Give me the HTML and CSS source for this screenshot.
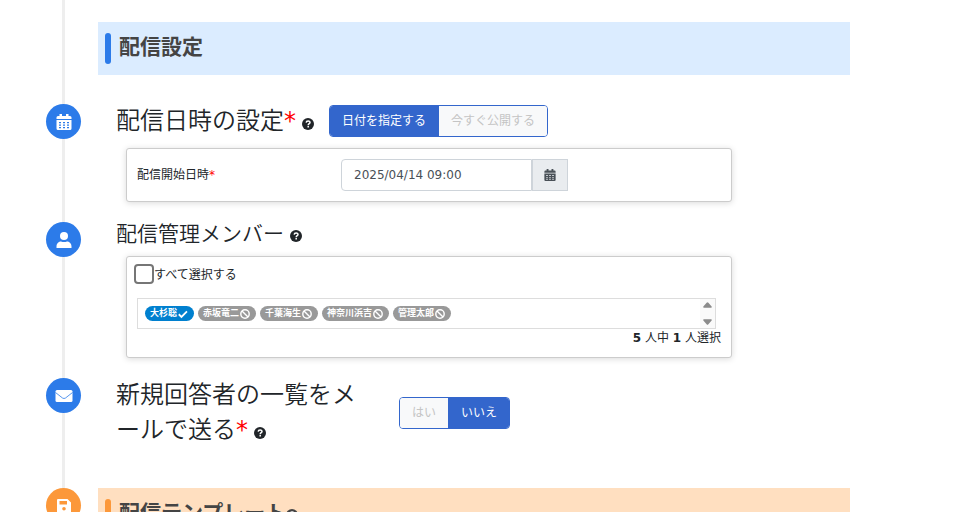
FILE: index.html
```html
<!DOCTYPE html>
<html lang="ja">
<head>
<meta charset="utf-8">
<meta name="viewport" content="width=device-width, initial-scale=1">
<title>配信設定</title>
<link rel="stylesheet" href="styles.css">
</head>
<body>
<svg class="sprite" aria-hidden="true">
  <symbol id="calendar" viewBox="0 0 16 16"><path d="M3.500 0h2.500v2h4V0h2.500v2H14a1.500 1.500 0 0 1 1.500 1.500V5H.5V3.500A1.500 1.500 0 0 1 2 2h1.500zM.5 6h15v8.500A1.500 1.500 0 0 1 14 16H2a1.500 1.500 0 0 1-1.500-1.500zM3 8v1.300h2V8zm4 0v1.300h2V8zm4 0v1.300h2V8zM3 10.500v1.300h2v-1.300zm4 0v1.300h2v-1.300zm4 0v1.300h2v-1.300zM3 13v1.300h2V13zm4 0v1.300h2V13zm4 0v1.300h2V13z" fill="currentColor" fill-rule="evenodd"/></symbol>
  <symbol id="user" viewBox="0 0 16 16"><circle cx="8" cy="4" r="4" fill="currentColor"/><path d="M.5 16v-1.500C.5 11 3 9.500 5 9.500c2 .8 4 .8 6 0 2 0 4.500 1.500 4.500 5V16z" fill="currentColor"/></symbol>
  <symbol id="mail" viewBox="0 0 18 14"><rect x=".5" y="1" width="17" height="12" rx="1.500" fill="currentColor"/><path d="M.5 3.500 7.500 9q1.500 1 3 0l7-5.500" fill="none" stroke="#2c7be9" stroke-width=".8"/></symbol>
  <symbol id="save" viewBox="0 0 16 16"><path d="M2 1h9.500L15 4.500V14a2 2 0 0 1-2 2H3a2 2 0 0 1-2-2V2a1 1 0 0 1 1-1zm1.500 2v3.500h7.500V3zM8 9a1.800 1.800 0 1 0 0 3.600A1.800 1.800 0 0 0 8 9z" fill="currentColor" fill-rule="evenodd"/></symbol>
  <symbol id="help" viewBox="0 0 12 12"><circle cx="6" cy="6" r="6" fill="currentColor"/><path d="M4.200 4.600C4.300 2.600 8 2.500 8 4.600 8 5.800 6.200 5.700 6.200 7.200M6.200 8.100v1.500" fill="none" stroke="#fff" stroke-width="1.500"/></symbol>
  <symbol id="check" viewBox="0 0 10 10"><path d="m1.500 5.200 2.200 2.200L8.300 2.800" fill="none" stroke="currentColor" stroke-width="1.500"/></symbol>
  <symbol id="ban" viewBox="0 0 10 10"><circle cx="5" cy="5" r="3.500" fill="none" stroke="currentColor" stroke-width="1.200"/><path d="m2.500 2.500 5 5" stroke="currentColor" stroke-width="1.200"/></symbol>
</svg>
<main class="timeline">
  <section class="row row-banner">
    <div></div>
    <h1 class="banner">配信設定</h1>
  </section>

  <section class="row row-date">
    <span class="marker"><svg><use href="#calendar"/></svg></span>
    <div>
      <div class="head">
        <h2 class="title">配信日時の設定<span class="req">*</span><svg class="help"><use href="#help"/></svg></h2>
        <div class="toggle" role="group" aria-label="配信日時の設定">
          <button type="button" class="on" aria-pressed="true">日付を指定する</button><button type="button" aria-pressed="false">今すぐ公開する</button>
        </div>
      </div>
      <div class="panel date">
        <label for="start">配信開始日時<span class="req">*</span></label>
        <div class="picker">
          <input id="start" type="text" value="2025/04/14 09:00">
          <button type="button" aria-label="カレンダー"><svg><use href="#calendar"/></svg></button>
        </div>
      </div>
    </div>
  </section>

  <section class="row row-members">
    <span class="marker"><svg><use href="#user"/></svg></span>
    <div>
      <h2 class="title small">配信管理メンバー<svg class="help"><use href="#help"/></svg></h2>
      <div class="panel members">
        <div class="all"><input id="all" type="checkbox"><label for="all">すべて選択する</label></div>
        <div class="list">
          <div class="chips">
            <button type="button" class="chip picked">大杉聡<svg><use href="#check"/></svg></button>
            <button type="button" class="chip">赤坂竜二<svg><use href="#ban"/></svg></button>
            <button type="button" class="chip">千葉海生<svg><use href="#ban"/></svg></button>
            <button type="button" class="chip">神奈川浜吉<svg><use href="#ban"/></svg></button>
            <button type="button" class="chip">管理太郎<svg><use href="#ban"/></svg></button>
          </div>
          <div class="scroll" aria-hidden="true">
            <svg viewBox="0 0 10 6"><path d="M1 6a1 1 0 0 1-.6-1.400L4 .6a1.300 1.300 0 0 1 2 0l3.600 4A1 1 0 0 1 9 6z" fill="#8b8b8b"/></svg>
            <svg viewBox="0 0 10 6"><path d="M1 0a1 1 0 0 0-.6 1.400L4 5.400a1.300 1.300 0 0 0 2 0l3.600-4A1 1 0 0 0 9 0z" fill="#8b8b8b"/></svg>
          </div>
        </div>
        <p class="count"><b>5</b> 人中 <b>1</b> 人選択</p>
      </div>
    </div>
  </section>

  <section class="row row-mail">
    <span class="marker"><svg class="wide"><use href="#mail"/></svg></span>
    <div class="head">
      <h2 class="title wrap">新規回答者の一覧をメールで送る<span class="req">*</span><svg class="help"><use href="#help"/></svg></h2>
      <div class="toggle" role="group" aria-label="新規回答者の一覧をメールで送る">
        <button type="button" aria-pressed="false">はい</button><button type="button" class="on" aria-pressed="true">いいえ</button>
      </div>
    </div>
  </section>

  <section class="row orange">
    <span class="marker"><svg><use href="#save"/></svg></span>
    <h1 class="banner">配信テンプレート<svg class="help"><use href="#help"/></svg></h1>
  </section>
</main>
</body>
</html>
```
FILE: styles.css
```css
* { box-sizing: border-box; }

body {
  margin: 0;
  height: 100vh;
  overflow: hidden;
  background: #fff;
  color: #212529;
  font: 12px/18px "DejaVu Sans", "Noto Sans CJK JP", sans-serif;
}

button, input { font: inherit; color: inherit; }
h1, h2, p { margin: 0; }
svg { display: block; flex: none; }
.sprite { position: absolute; width: 0; height: 0; }
.req { color: #f00; font-weight: 400; }

.timeline {
  padding: 22px 110px 0 0;
  background: linear-gradient(#eee, #eee) 62px 0 / 3px 100% no-repeat;
}

.row {
  display: grid;
  grid-template-columns: 98px minmax(0, 1fr);
  align-items: start;
}
.row-banner { margin-bottom: 29px; }
.row-date { margin-bottom: 20px; }
.row-members { margin-bottom: 20px; }
.row-mail { margin-bottom: 40px; }

.banner {
  display: flex;
  align-items: flex-start;
  height: 53px;
  padding: 10px 7px;
  background: #dbecff;
  color: #444;
  font-size: 21px;
  line-height: 31px;
  font-weight: 700;
}
.banner::before {
  content: "";
  width: 6px;
  height: 31px;
  margin: 1px 8px 0 0;
  border-radius: 3px;
  background: #2c7be9;
}
.banner .help { align-self: center; }

.marker {
  display: grid;
  place-items: center;
  width: 35px;
  height: 35px;
  margin-left: 46px;
  border-radius: 50%;
  background: #2c7be9;
  color: #fff;
}
.marker svg { width: 16px; height: 16px; }
.marker .wide { width: 18px; height: 14px; }

.orange .marker, .orange .banner::before { background: #fc983a; }
.orange .banner { background: #ffdfc0; }

.head { display: flex; align-items: center; padding-left: 18px; }

.title { font-size: 24px; line-height: 34px; font-weight: 350; }
.title.small { padding-left: 18px; font-size: 21px; line-height: 24px; }
.title.wrap { width: 240px; margin-right: 43px; line-height: 35px; }
.help { display: inline-block; width: 12px; height: 12px; }
.title .help { margin-left: 6px; vertical-align: -1px; }

.toggle {
  display: flex;
  height: 32px;
  border: 1px solid #36c;
  border-radius: 4px;
  overflow: hidden;
}
.row-date .toggle { margin-left: 15px; }
.toggle button {
  padding: 0 12px;
  border: 0;
  background: #f8f9fa;
  color: #c4c4c4;
}
.toggle button + button { border-left: 1px solid #36c; }
.toggle .on { background: #36c; color: #fff; }

.panel {
  margin: 10px 118px 0 28px;
  border: 1px solid #ccc;
  border-radius: 3px;
  background: #fff;
  box-shadow: 0 1px 6px rgba(0, 0, 0, .15);
}

.date {
  display: grid;
  grid-template-columns: 204px 1fr;
  align-items: center;
  padding: 10px;
}
.picker { display: flex; height: 32px; }
.picker input {
  width: 191px;
  padding: 0 12px;
  border: 1px solid #ced4da;
  border-radius: 4px 0 0 4px;
  background: #fff;
  color: #495057;
}
.picker button {
  display: grid;
  place-items: center;
  width: 36px;
  padding: 0;
  border: 1px solid #ced4da;
  background: #e9ecef;
  color: #495057;
}
.picker svg { width: 12px; height: 12px; }

.members { padding: 7px 10px 10px; }
.all { display: flex; height: 20px; margin-left: -3px; }
.all input {
  appearance: none;
  width: 20px;
  height: 20px;
  margin: 0;
  border: 2px solid #767676;
  border-radius: 4px;
  background: #fff;
}
.all label { padding-top: 2px; }

.list {
  display: flex;
  justify-content: space-between;
  height: 31px;
  margin: 14px 5px 0 0;
  border: 1px solid #ddd;
}
.chips { display: flex; gap: 4px; padding: 7px; }
.chip {
  display: flex;
  align-items: center;
  height: 15px;
  padding: 0 5px;
  border: 0;
  border-radius: 8px;
  background: #999;
  color: #fff;
  font-size: 9px;
  line-height: 15px;
  font-weight: 700;
}
.chip.picked { background: #0080cf; }
.chip svg { width: 12px; height: 12px; }

.scroll {
  display: flex;
  flex-direction: column;
  justify-content: space-between;
  align-items: center;
  width: 15px;
  padding: 3px 0;
  background: #fafafa;
}
.scroll svg { width: 9px; height: 6px; }

.count { text-align: right; }
```
